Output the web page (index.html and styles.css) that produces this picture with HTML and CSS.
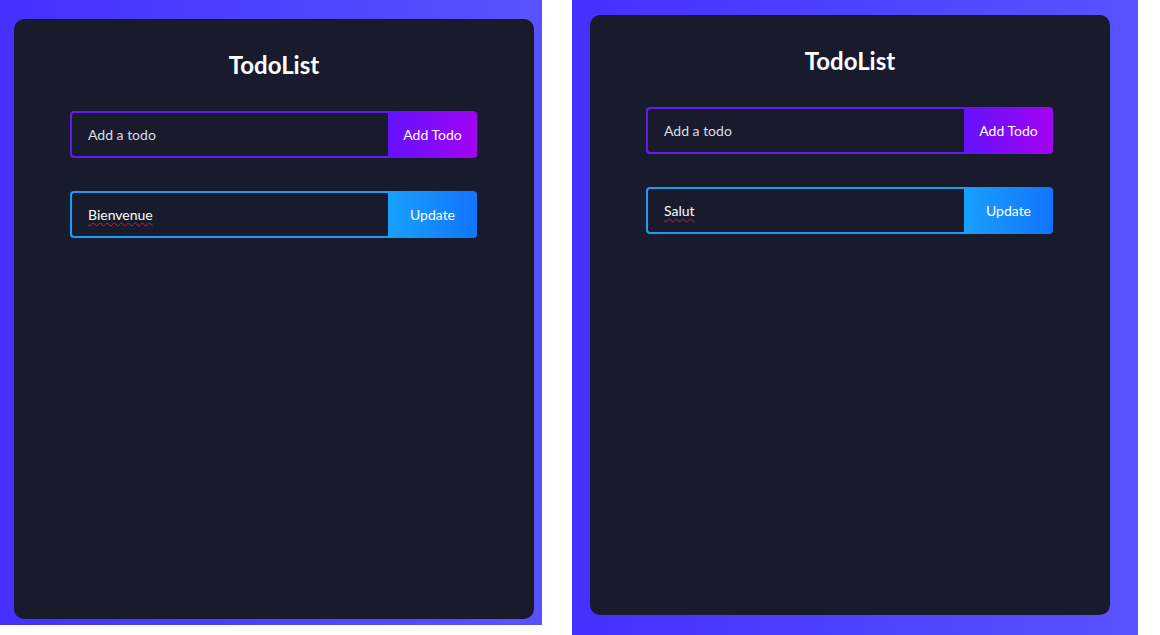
FILE: index.html
```html
<!DOCTYPE html>
<html lang="fr">
<head>
<meta charset="utf-8">
<title>TodoList</title>
<link rel="stylesheet" href="styles.css">
</head>
<body>
<div class="shots">
  <div class="app app-left">
    <div class="card">
      <h1 class="title">TodoList</h1>
      <form class="row row-add">
        <input class="field field-add" type="text" placeholder="Add a todo">
        <button class="btn btn-add" type="button">Add Todo</button>
      </form>
      <form class="row row-edit">
        <div class="field-wrap">
          <input class="field field-edit" type="text" value="Bienvenue">
          <span class="squiggle" aria-hidden="true">Bienvenue</span>
        </div>
        <button class="btn btn-update" type="button">Update</button>
      </form>
    </div>
  </div>
  <div class="app app-right">
    <div class="card">
      <h1 class="title">TodoList</h1>
      <form class="row row-add">
        <input class="field field-add" type="text" placeholder="Add a todo">
        <button class="btn btn-add" type="button">Add Todo</button>
      </form>
      <form class="row row-edit">
        <div class="field-wrap">
          <input class="field field-edit" type="text" value="Salut">
          <span class="squiggle" aria-hidden="true">Salut</span>
        </div>
        <button class="btn btn-update" type="button">Update</button>
      </form>
    </div>
  </div>
</div>
</body>
</html>
```
FILE: styles.css
```css
* { box-sizing: border-box; }

html, body {
  margin: 0;
  padding: 0;
  background: #ffffff;
  font-family: "Lato", "Open Sans", "DejaVu Sans", sans-serif;
}

.shots {
  display: flex;
  align-items: flex-start;
  gap: 30px;
}

.app {
  background: linear-gradient(90deg, #4530ff 0%, #5853ff 100%);
  flex: none;
}

.app-left {
  width: 542px;
  height: 625px;
  padding: 19px 8px 6px 14px;
}

.app-right {
  width: 566px;
  height: 635px;
  padding: 15px 28px 20px 18px;
}

.card {
  width: 520px;
  height: 600px;
  background: #181b2c;
  border-radius: 10px;
  padding-top: 31px;
  display: flex;
  flex-direction: column;
  align-items: center;
}

.title {
  margin: 0;
  color: #ffffff;
  font-size: 24px;
  line-height: 30px;
  font-weight: 700;
  text-align: center;
}

.row {
  display: flex;
  width: 407px;
  height: 47px;
  margin: 0;
  align-self: flex-start;
  margin-left: 56px;
}

.row-add { margin-top: 31px; }
.row-edit { margin-top: 33px; }

.field-wrap {
  position: relative;
  flex: 1;
  min-width: 0;
  display: flex;
}

.field {
  flex: 1;
  min-width: 0;
  height: 47px;
  background: transparent;
  border: 2px solid #6419f5;
  border-right: none;
  border-radius: 4px 0 0 4px;
  padding: 0 0 0 16px;
  color: #ffffff;
  font-family: inherit;
  font-size: 14px;
  outline: none;
}

.field::placeholder { color: #dcdde4; }

.field-edit { border-color: #1a9cfb; }

.squiggle {
  position: absolute;
  left: 18px;
  top: 0;
  height: 47px;
  line-height: 47px;
  font-size: 14px;
  color: transparent;
  text-decoration: underline wavy #e0182b;
  text-decoration-thickness: 1px;
  text-underline-offset: 2px;
  pointer-events: none;
  white-space: nowrap;
}

.btn {
  width: 89px;
  flex: none;
  height: 47px;
  border: none;
  border-radius: 0 4px 4px 0;
  color: #ffffff;
  font-family: inherit;
  font-size: 14px;
  padding: 0;
  cursor: pointer;
}

.btn-add { background: linear-gradient(90deg, #6412fd 0%, #a103f2 100%); }
.btn-update { background: linear-gradient(90deg, #19a0fd 0%, #1274fc 100%); }
```
